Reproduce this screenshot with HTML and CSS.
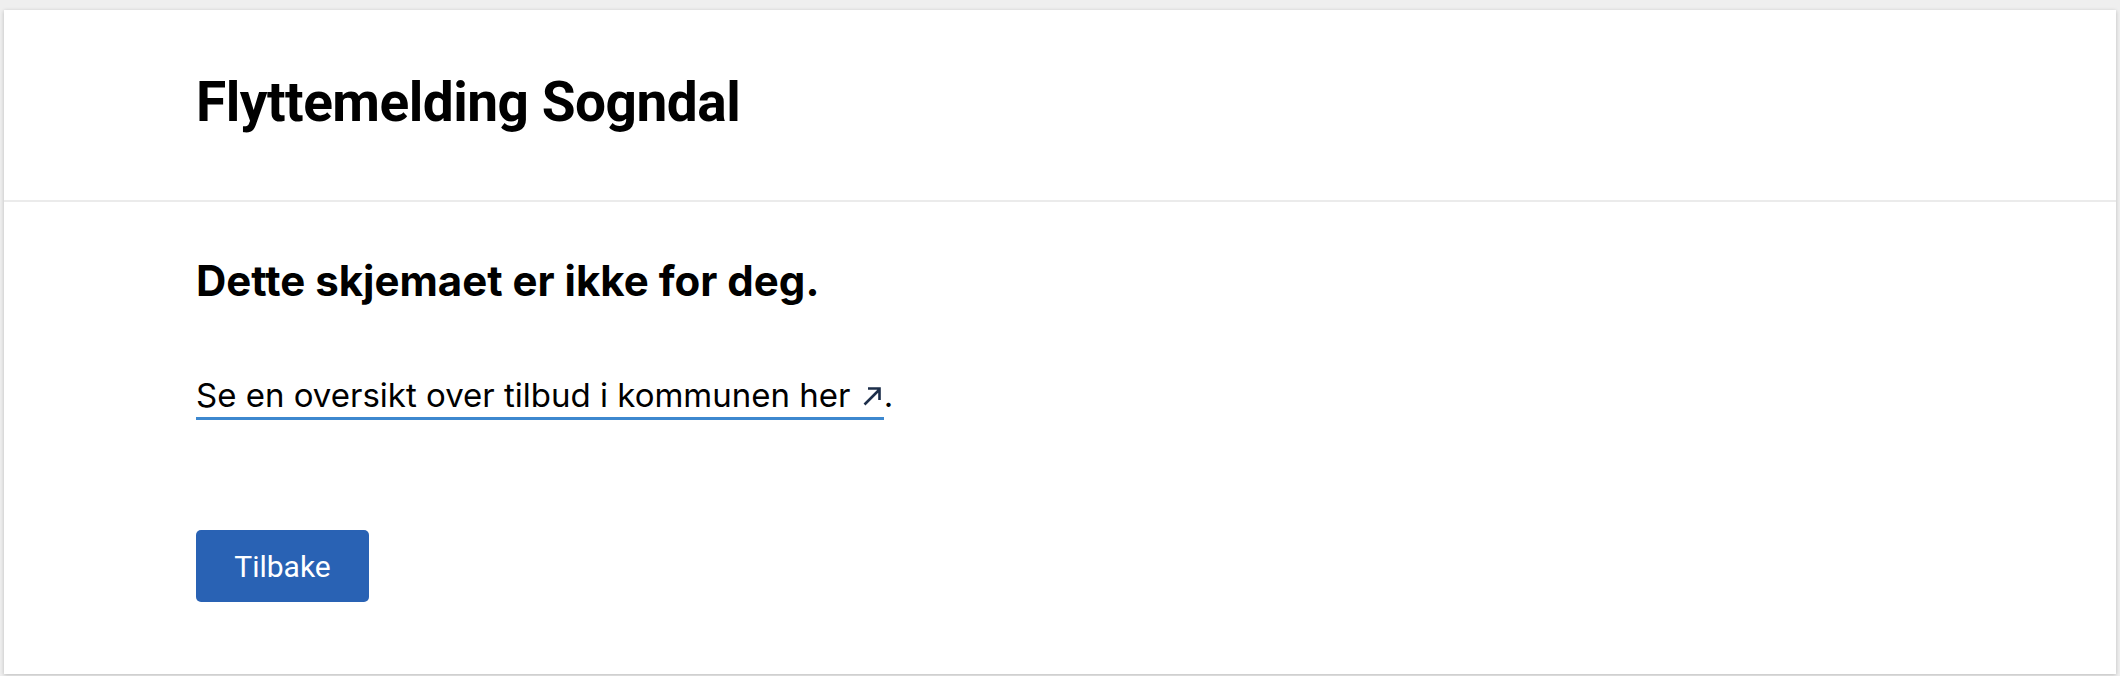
FILE: index.html
```html
<!DOCTYPE html>
<html lang="no">
<head>
<meta charset="utf-8">
<title>Flyttemelding Sogndal</title>
<link rel="stylesheet" href="styles.css">
</head>
<body>
<div class="card">
  <header class="header">
    <h1 class="title">Flyttemelding Sogndal</h1>
  </header>
  <main class="content">
    <h2 class="subtitle">Dette skjemaet er ikke for deg.</h2>
    <p class="text"><a class="link" href="#">Se en oversikt over tilbud i kommunen her <svg class="ext" viewBox="0 0 24 24" width="24" height="24" aria-hidden="true"><path d="M4.5 20.5 L19.5 5.5 M8 4.5 H19.5 V16" fill="none" stroke="#1c2e4a" stroke-width="2.6"/></svg></a>.</p>
    <button class="btn" type="button">Tilbake</button>
  </main>
</div>
</body>
</html>
```
FILE: styles.css
```css
html, body {
  margin: 0;
  padding: 0;
  background: #efefef;
  height: 676px;
  overflow: hidden;
}
body {
  padding: 10px 4px 0 4px;
  box-sizing: border-box;
}
.card {
  background: #fff;
  height: 664px;
  box-shadow: 0 1px 4px rgba(0, 0, 0, 0.22);
}
.header {
  height: 192px;
  box-sizing: border-box;
  border-bottom: 2px solid #ebebeb;
  padding: 65px 0 0 192px;
}
.title {
  margin: 0;
  font-family: Roboto, "Liberation Sans", sans-serif;
  font-weight: 700;
  font-size: 55px;
  letter-spacing: -0.5px;
  line-height: 55px;
  color: #000;
}
.content {
  padding: 0 192px;
}
.subtitle {
  margin: 0;
  padding-top: 54px;
  font-family: Inter, "Liberation Sans", sans-serif;
  font-weight: 700;
  font-size: 42px;
  line-height: 50px;
  color: #000;
}
.text {
  margin: 0;
  padding-top: 69px;
  font-family: Inter, "Liberation Sans", sans-serif;
  font-size: 33px;
  line-height: 40px;
  color: #000;
}
.link {
  color: #000;
  text-decoration: none;
  border-bottom: 3px solid #3d88cf;
  padding-bottom: 2px;
}
.ext {
  vertical-align: -1px;
}
.btn {
  display: block;
  margin-top: 115px;
  width: 173px;
  height: 72px;
  border: 0;
  border-radius: 5px;
  background: #2962b4;
  color: #fff;
  font-family: Roboto, "Liberation Sans", sans-serif;
  font-size: 30px;
  padding: 0;
}
```
